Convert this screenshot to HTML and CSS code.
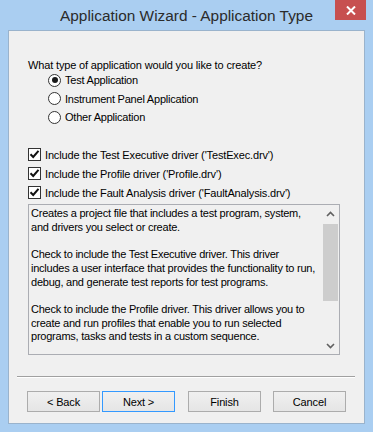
FILE: index.html
```html
<!DOCTYPE html>
<html>
<head>
<meta charset="utf-8">
<link rel="stylesheet" href="styles.css">
</head>
<body>
<div class="window">
  <div class="titlebar">
    <span></span>
    <div class="title">Application Wizard - Application Type</div>
    <div class="close"><svg width="10" height="9" viewBox="0 0 10 9"><path d="M1 0.5 L9 8.5 M9 0.5 L1 8.5" stroke="#fff" stroke-width="2"/></svg></div>
  </div>
  <div class="client">
    <div class="question">What type of application would you like to create?</div>
    <div class="radios">
      <div class="row"><span class="radio on"></span><span>Test Application</span></div>
      <div class="row"><span class="radio"></span><span>Instrument Panel Application</span></div>
      <div class="row"><span class="radio"></span><span>Other Application</span></div>
    </div>
    <div class="checks">
      <div class="row"><span class="check"><svg width="11" height="11" viewBox="0 0 11 11"><path d="M1.5 5.2 L4.2 8 L9.5 1.8" fill="none" stroke="#111" stroke-width="2"/></svg></span><span>Include the Test Executive driver ('TestExec.drv')</span></div>
      <div class="row"><span class="check"><svg width="11" height="11" viewBox="0 0 11 11"><path d="M1.5 5.2 L4.2 8 L9.5 1.8" fill="none" stroke="#111" stroke-width="2"/></svg></span><span>Include the Profile driver ('Profile.drv')</span></div>
      <div class="row"><span class="check"><svg width="11" height="11" viewBox="0 0 11 11"><path d="M1.5 5.2 L4.2 8 L9.5 1.8" fill="none" stroke="#111" stroke-width="2"/></svg></span><span>Include the Fault Analysis driver ('FaultAnalysis.drv')</span></div>
    </div>
    <div class="textbox">
      <div class="text">
        <p>Creates a project file that includes a test program, system,<br>and drivers you select or create.</p>
        <p>Check to include the Test Executive driver. This driver<br>includes a user interface that provides the functionality to run,<br>debug, and generate test reports for test programs.</p>
        <p>Check to include the Profile driver. This driver allows you to<br>create and run profiles that enable you to run selected<br>programs, tasks and tests in a custom sequence.</p>
      </div>
      <div class="scrollbar">
        <div class="arrow"><svg width="9" height="6" viewBox="0 0 9 6"><path d="M1 5 L4.5 1.5 L8 5" fill="none" stroke="#606060" stroke-width="1.6"/></svg></div>
        <div class="track"><div class="thumb"></div></div>
        <div class="arrow"><svg width="9" height="6" viewBox="0 0 9 6"><path d="M1 1 L4.5 4.5 L8 1" fill="none" stroke="#606060" stroke-width="1.6"/></svg></div>
      </div>
    </div>
    <div class="separator"></div>
    <div class="buttons">
      <div class="btn">&lt; Back</div>
      <div class="btn default">Next &gt;</div>
      <div class="btn finish">Finish</div>
      <div class="btn cancel">Cancel</div>
    </div>
  </div>
</div>
</body>
</html>
```

FILE: styles.css
```css
* { box-sizing: border-box; }
html, body { margin: 0; padding: 0; }
body {
  width: 373px;
  height: 432px;
  background: #aacef1;
  font-family: "Liberation Sans", Arial, sans-serif;
  font-size: 11px;
  letter-spacing: -0.15px;
  color: #000;
  overflow: hidden;
}
.window {
  width: 373px;
  height: 432px;
  display: flex;
  flex-direction: column;
}
.titlebar {
  height: 30px;
  display: grid;
  grid-template-columns: 1fr auto 1fr;
  align-items: start;
}
.title {
  font-size: 15.4px;
  letter-spacing: 0;
  color: #2b2b2b;
  line-height: 30px;
  padding-top: 1px;
  white-space: nowrap;
}
.close {
  justify-self: end;
  margin-right: 7px;
  width: 31px;
  height: 20px;
  background: #c75050;
  display: flex;
  align-items: center;
  justify-content: center;
}
.close svg { display: block; }
.client {
  margin: 0 8px;
  height: 394px;
  background: #f0f0f0;
  border: 1px solid #9ab3cc;
  padding-top: 28px;
}
.question {
  padding-left: 19px;
  line-height: 12px;
  height: 12px;
}
.row {
  display: flex;
  align-items: center;
  white-space: nowrap;
}
.radios .row {
  height: 18.5px;
  padding-left: 39px;
  gap: 4px;
}
.radios .row span:last-child { letter-spacing: -0.22px; }
.radio {
  width: 13px;
  height: 13px;
  border: 1px solid #333;
  border-radius: 50%;
  background: #fff;
  display: flex;
  align-items: center;
  justify-content: center;
}
.radio.on::after {
  content: "";
  width: 6px;
  height: 6px;
  border-radius: 50%;
  background: #1a1a1a;
}
.checks { margin-top: 18.5px; }
.checks .row {
  height: 19px;
  padding-left: 19px;
  gap: 4px;
}
.check {
  width: 13px;
  height: 13px;
  border: 1px solid #333;
  background: #fff;
  display: flex;
  align-items: center;
  justify-content: center;
}
.check svg { display: block; }
.textbox {
  margin: 2px 0 0 19px;
  width: 312px;
  height: 151px;
  border: 1px solid #abadb3;
  display: flex;
}
.text {
  flex: 1;
  padding: 2.2px 0 0 2px;
  line-height: 13.67px;
  letter-spacing: -0.23px;
  white-space: nowrap;
  overflow: hidden;
}
.text p { margin: 0 0 13.67px 0; }
.scrollbar {
  width: 17px;
  display: flex;
  flex-direction: column;
  background: #f0f0f0;
}
.arrow {
  height: 17px;
  display: flex;
  align-items: center;
  justify-content: center;
}
.track {
  flex: 1;
  padding-top: 2px;
}
.thumb {
  margin: 0 1px;
  height: 77px;
  background: #cdcdcd;
}
.separator {
  margin: 21px 9px 0 8px;
  height: 2px;
  border-top: 1px solid #a0a0a0;
  border-bottom: 1px solid #fff;
}
.buttons {
  margin-top: 13px;
  padding-left: 18px;
  display: flex;
}
.btn {
  width: 73px;
  height: 21px;
  border: 1px solid #acacac;
  background: linear-gradient(#f0f0f0, #e5e5e5);
  display: flex;
  align-items: center;
  justify-content: center;
  font-size: 11px;
}
.btn.default {
  margin-left: 2px;
  border-color: #3399ff;
}
.btn.finish { margin-left: 13px; }
.btn.cancel { margin-left: 12px; }
```
